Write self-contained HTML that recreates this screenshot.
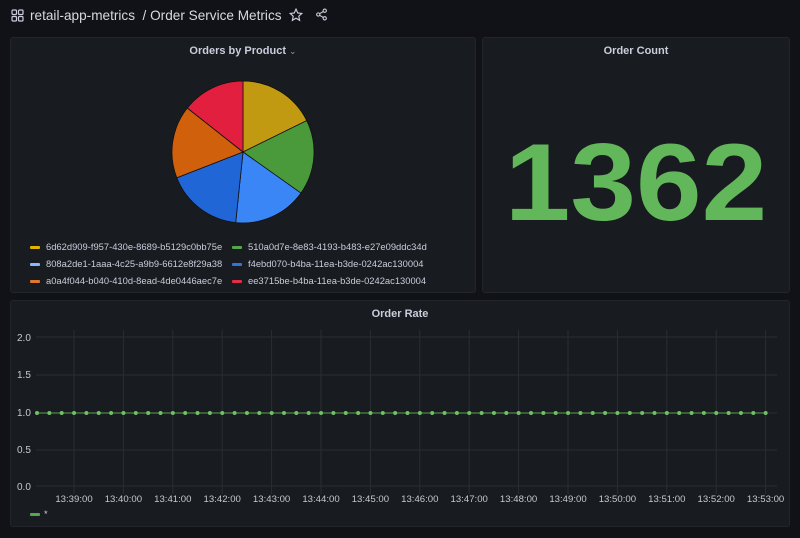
<!DOCTYPE html>
<html><head><meta charset="utf-8"><style>
*{margin:0;padding:0;box-sizing:border-box}
body{width:800px;height:538px;background:#111217;font-family:"Liberation Sans",sans-serif;position:relative;overflow:hidden;color:#ccccdc}
.p{position:absolute;background:#181b1f;border:1px solid #22252b;border-radius:3px}
.t{position:absolute;left:0;right:0;text-align:center;font-size:11px;font-weight:bold;color:#ccccdc}
.lg{position:absolute;font-size:9.4px;color:#ccccdc;white-space:nowrap}
.lg span{display:inline-block;width:10px;height:3px;vertical-align:middle;margin-right:6px;border-radius:1px}
</style></head><body>
<svg style="position:absolute;left:11px;top:9px" width="13" height="13" viewBox="0 0 13 13" fill="none" stroke="#ccccdc" stroke-width="1.2"><rect x="1" y="1" width="4.5" height="4.5" rx="1"/><rect x="7.5" y="1" width="4.5" height="4.5" rx="1"/><rect x="1" y="7.5" width="4.5" height="4.5" rx="1"/><rect x="7.5" y="7.5" width="4.5" height="4.5" rx="1"/></svg>
<div style="position:absolute;left:30px;top:8px;font-size:13.6px;color:#d8d9e0;white-space:nowrap">retail-app-metrics &nbsp;/ Order Service Metrics</div>
<svg style="position:absolute;left:289px;top:8px" width="14" height="14" viewBox="0 0 24 24" fill="none" stroke="#ccccdc" stroke-width="2"><path d="M12 2l3 6.5 7 .8-5.2 4.8 1.4 7-6.2-3.6-6.2 3.6 1.4-7L2 9.3l7-.8z"/></svg>
<svg style="position:absolute;left:315px;top:8px" width="13" height="13" viewBox="0 0 24 24" fill="none" stroke="#ccccdc" stroke-width="2"><circle cx="18" cy="5" r="3"/><circle cx="6" cy="12" r="3"/><circle cx="18" cy="19" r="3"/><path d="M8.6 13.5l6.8 4M15.4 6.5l-6.8 4"/></svg>

<div class="p" style="left:10px;top:37px;width:466px;height:256px">
<div class="t" style="top:7px">Orders by Product <span style="font-weight:normal;font-size:9px;color:#999">⌄</span></div>
<div class="lg" style="left:19px;top:203px"><span style="background:#e0b400"></span>6d62d909-f957-430e-8689-b5129c0bb75e</div>
<div class="lg" style="left:221px;top:203px"><span style="background:#56a64b"></span>510a0d7e-8e83-4193-b483-e27e09ddc34d</div>
<div class="lg" style="left:19px;top:220px"><span style="background:#8ab8ff"></span>808a2de1-1aaa-4c25-a9b9-6612e8f29a38</div>
<div class="lg" style="left:221px;top:220px"><span style="background:#3274d9"></span>f4ebd070-b4ba-11ea-b3de-0242ac130004</div>
<div class="lg" style="left:19px;top:237px"><span style="background:#e0752d"></span>a0a4f044-b040-410d-8ead-4de0446aec7e</div>
<div class="lg" style="left:221px;top:237px"><span style="background:#e02f44"></span>ee3715be-b4ba-11ea-b3de-0242ac130004</div>
</div>
<svg style="position:absolute;left:0;top:0" width="800" height="300">
<g stroke="#111" stroke-width="0.8">
<path d="M243 152L243 81A71 71 0 0 1 306.7 120.6Z" fill="#c29a12"/>
<path d="M243 152L306.7 120.6A71 71 0 0 1 300.9 193.1Z" fill="#4a9a3c"/>
<path d="M243 152L300.9 193.1A71 71 0 0 1 235.7 222.6Z" fill="#3b86f7"/>
<path d="M243 152L235.7 222.6A71 71 0 0 1 176.8 177.8Z" fill="#2066d6"/>
<path d="M243 152L176.8 177.8A71 71 0 0 1 187.3 108Z" fill="#d0600c"/>
<path d="M243 152L187.3 108A71 71 0 0 1 243 81Z" fill="#e21f3f"/>
</g></svg>

<div class="p" style="left:482px;top:37px;width:308px;height:256px">
<div class="t" style="top:7px">Order Count</div>
<div style="position:absolute;left:0;right:0;top:80px;text-align:center;font-size:118px;line-height:130px;color:#62b75a;font-weight:bold;transform:scaleY(0.93)">1362</div>
</div>

<div class="p" style="left:10px;top:300px;width:780px;height:227px">
<div class="t" style="top:7px">Order Rate</div>
<div class="lg" style="left:19px;top:207px"><span style="background:#56a64b;margin-right:4px"></span>*</div>
</div>
<svg style="position:absolute;left:0;top:300px" width="800" height="238" font-family="Liberation Sans" font-size="9.6" fill="#c7c8d0">
<g stroke="#2a2d33" stroke-width="1">
<path d="M36 37H777M36 75H777M36 113H777M36 150H777M36 186H777"/>
<path d="M74 30V194M123.4 30V194M172.8 30V194M222.2 30V194M271.6 30V194M321 30V194M370.4 30V194M419.8 30V194M469.2 30V194M518.6 30V194M568 30V194M617.4 30V194M666.8 30V194M716.2 30V194M765.6 30V194"/>
</g>
<g font-size="10"><text x="17" y="41">2.0</text><text x="17" y="78">1.5</text><text x="17" y="116">1.0</text><text x="17" y="153">0.5</text><text x="17" y="190">0.0</text></g>
<g text-anchor="middle">
<text x="74" y="202">13:39:00</text><text x="123.4" y="202">13:40:00</text><text x="172.8" y="202">13:41:00</text><text x="222.2" y="202">13:42:00</text><text x="271.6" y="202">13:43:00</text><text x="321" y="202">13:44:00</text><text x="370.4" y="202">13:45:00</text><text x="419.8" y="202">13:46:00</text><text x="469.2" y="202">13:47:00</text><text x="518.6" y="202">13:48:00</text><text x="568" y="202">13:49:00</text><text x="617.4" y="202">13:50:00</text><text x="666.8" y="202">13:51:00</text><text x="716.2" y="202">13:52:00</text><text x="765.6" y="202">13:53:00</text>
</g>
<path d="M37 113H766" stroke="#56a64b" stroke-width="1"/>
<path d="M37 113H767" stroke="#73bf69" stroke-width="4" stroke-linecap="round" stroke-dasharray="0 12.35"/>
</svg>
</body></html>
